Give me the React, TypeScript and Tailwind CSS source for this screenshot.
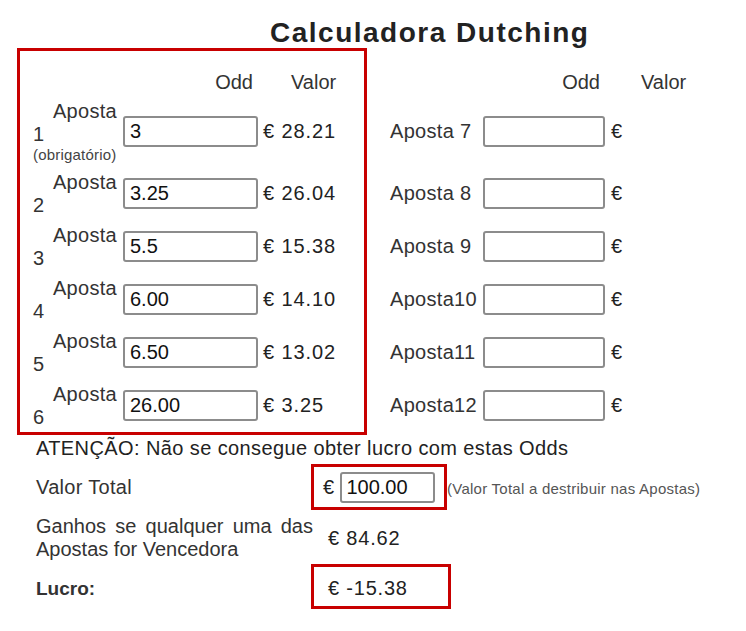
import * as React from 'react';

const leftRows = [
    { n: '2', odd: '3.25', val: '26.04' },
    { n: '3', odd: '5.5', val: '15.38' },
    { n: '4', odd: '6.00', val: '14.10' },
    { n: '5', odd: '6.50', val: '13.02' },
    { n: '6', odd: '26.00', val: '3.25' },
];

const rightRows = ['Aposta 8', 'Aposta 9', 'Aposta10', 'Aposta11', 'Aposta12'];

const OddInput = ({ value, w }: { value?: string; w: string }) => (
    <input
        readOnly
        value={value ?? ''}
        className={`${w} h-[31px] border-2 border-[#8c8c8c] rounded-[3px] bg-white pl-[5px] text-[20px] tracking-normal text-[#111] outline-none`}
    />
);

const App = () => {
    return (
        <div className="w-[746px] h-[631px] bg-white text-[20px] leading-[23px] tracking-[0.3px] text-[#333] overflow-hidden" style={{ fontFamily: '"Liberation Sans", Arial, sans-serif' }}>
            <div className="pt-[17px] pl-[270px] h-[48px]">
                <h1 className="text-[28px] leading-[31px] font-bold tracking-[1.5px] text-[#222]">Calculadora Dutching</h1>
            </div>

            <div className="flex items-start">
                {/* apostas 1 a 6 */}
                <div className="ml-[17px] w-[350px] border-[3px] border-[#c80000]">
                    <div className="flex h-[44px] pt-[20px] tracking-normal">
                        <div className="w-[103px]" />
                        <div className="w-[135px] text-right pr-[5px]">Odd</div>
                        <div className="pl-[33px]">Valor</div>
                    </div>
                    <div className="flex items-center h-[72px]">
                        <div className="w-[103px] pl-[13px] pr-[6px]">
                            <div className="text-right">Aposta</div>
                            <div>1</div>
                            <div className="text-[15px] leading-[17px] tracking-[0.2px] text-[#444]">(obrigatório)</div>
                        </div>
                        <OddInput value="3" w="w-[135px]" />
                        <div className="ml-[5px] tracking-[0.9px] text-[#222]">€ 28.21</div>
                    </div>
                    {leftRows.map((r) => (
                        <div key={r.n} className="flex items-center h-[53px]">
                            <div className="w-[103px] pl-[13px] pr-[6px]">
                                <div className="text-right">Aposta</div>
                                <div>{r.n}</div>
                            </div>
                            <OddInput value={r.odd} w="w-[135px]" />
                            <div className="ml-[5px] tracking-[0.9px] text-[#222]">€ {r.val}</div>
                        </div>
                    ))}
                </div>

                {/* apostas 7 a 12 */}
                <div className="border-y-[3px] border-transparent pl-[23px]">
                    <div className="flex h-[44px] pt-[20px] tracking-normal">
                        <div className="w-[93px]" />
                        <div className="w-[122px] text-right pr-[5px]">Odd</div>
                        <div className="pl-[36px]">Valor</div>
                    </div>
                    <div className="flex items-center h-[72px]">
                        <div className="w-[93px]">Aposta 7</div>
                        <OddInput w="w-[122px]" />
                        <div className="ml-[6px] text-[#222]">€</div>
                    </div>
                    {rightRows.map((label) => (
                        <div key={label} className="flex items-center h-[53px]">
                            <div className="w-[93px]">{label}</div>
                            <OddInput w="w-[122px]" />
                            <div className="ml-[6px] text-[#222]">€</div>
                        </div>
                    ))}
                </div>
            </div>

            <div className="pl-[36px]">
                <div className="mt-[2px] h-[23px] tracking-[0.4px] text-[#222]">ATENÇÃO: Não se consegue obter lucro com estas Odds</div>

                <div className="flex items-center mt-[4px] h-[46px]">
                    <div className="w-[275px]">Valor Total</div>
                    <div className="flex items-center w-[136px] h-[46px] border-[3px] border-[#c80000] pl-[9px]">
                        <span className="text-[#222]">€</span>
                        <input
                            readOnly
                            value="100.00"
                            className="ml-[6px] w-[95px] h-[31px] border-2 border-[#8c8c8c] rounded-[3px] bg-white pl-[4px] text-[20px] tracking-normal text-[#111] outline-none"
                        />
                    </div>
                    <div className="text-[15px] leading-[17px] tracking-[0.25px] text-[#555] pt-[2px]">(Valor Total a destribuir nas Apostas)</div>
                </div>

                <div className="flex items-center mt-[5px] h-[46px]">
                    <div className="w-[277px] text-justify tracking-normal">Ganhos se qualquer uma das Apostas for Vencedora</div>
                    <div className="ml-[15px] tracking-[0.8px] text-[#222]">€ 84.62</div>
                </div>

                <div className="flex items-center mt-[3px] h-[45px]">
                    <div className="w-[275px] pt-[4px] text-[19px] font-bold tracking-normal text-[#333]">Lucro:</div>
                    <div className="flex items-center w-[140px] h-[45px] border-[3px] border-[#c80000] pl-[14px] pt-[3px] tracking-[0.8px] text-[#222]">€ -15.38</div>
                </div>
            </div>
        </div>
    );
};

export default App;
